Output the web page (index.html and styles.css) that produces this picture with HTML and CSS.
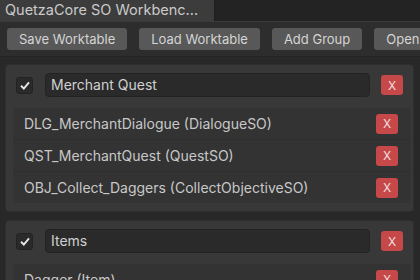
FILE: index.html
```html
<!DOCTYPE html>
<html lang="en">
<head>
    <meta charset="UTF-8">
    <title>QuetzaCore SO Workbench</title>
    <link rel="stylesheet" href="styles.css">
</head>
<body>
    <div class="tabbar">
        <div class="tab">QuetzaCore SO Workbenc...</div>
        <div class="tab-rest"></div>
    </div>
    <div class="toolbar">
        <button class="tool-btn">Save Worktable</button>
        <button class="tool-btn">Load Worktable</button>
        <button class="tool-btn">Add Group</button>
        <button class="tool-btn">Open</button>
    </div>
    <div class="groups">
        <div class="group">
            <div class="group-head">
                <span class="check"><svg width="10" height="9" viewBox="0 0 10 9"><path d="M1 4.8 L3.8 7.5 L9 1.3" fill="none" stroke="#e8e8e8" stroke-width="1.9"/></svg></span>
                <div class="name-field">Merchant Quest</div>
                <button class="del">X</button>
            </div>
            <div class="items">
                <div class="item"><span>DLG_MerchantDialogue (DialogueSO)</span><button class="del">X</button></div>
                <div class="item"><span>QST_MerchantQuest (QuestSO)</span><button class="del">X</button></div>
                <div class="item"><span>OBJ_Collect_Daggers (CollectObjectiveSO)</span><button class="del">X</button></div>
            </div>
        </div>
        <div class="group">
            <div class="group-head">
                <span class="check"><svg width="10" height="9" viewBox="0 0 10 9"><path d="M1 4.8 L3.8 7.5 L9 1.3" fill="none" stroke="#e8e8e8" stroke-width="1.9"/></svg></span>
                <div class="name-field">Items</div>
                <button class="del">X</button>
            </div>
            <div class="items">
                <div class="item"><span>Dagger (Item)</span><button class="del">X</button></div>
            </div>
        </div>
    </div>
</body>
</html>
```

FILE: styles.css
```css
body {
    margin: 0;
    width: 420px;
    height: 280px;
    overflow: hidden;
    background-color: #282828;
    font-family: Inter, "Noto Sans", sans-serif;
    color: #c8c8c8;
}
.tabbar {
    display: flex;
    height: 21px;
    background-color: #232323;
}
.tab {
    width: 209px;
    padding-left: 5px;
    background-color: #3c3c3c;
    font-size: 14.5px;
    line-height: 20px;
    color: #cacaca;
    white-space: nowrap;
}
.tab-rest {
    flex: 1;
    border-left: 1px solid #1e1e1e;
}
.toolbar {
    display: flex;
    gap: 12px;
    padding: 6px 0 6px 7px;
    background-color: #2d2d2d;
    border-top: 1px solid #3a3a3a;
    border-bottom: 1px solid #242424;
    overflow: hidden;
}
.tool-btn {
    flex-shrink: 0;
    height: 22px;
    padding: 0 12px;
    background-color: #585858;
    color: #d4d4d4;
    border: none;
    border-radius: 3px;
    font-family: Inter, "Noto Sans", sans-serif;
    font-size: 13px;
}
.groups {
    padding: 7px 6px 0 5px;
}
.group {
    background-color: #383838;
    border: 1px solid #2e2e2e;
    border-radius: 4px;
    padding: 8px 10px 8px 7px;
    margin-bottom: 8px;
}
.group-head {
    display: flex;
    align-items: center;
    height: 24px;
}
.check {
    display: flex;
    align-items: center;
    justify-content: center;
    width: 17px;
    height: 17px;
    margin-left: 3px;
    border-radius: 3px;
    background-color: #2a2a2a;
    border: 1px solid #232323;
    box-sizing: border-box;
}
.name-field {
    flex: 1;
    margin-left: 12px;
    height: 24px;
    padding-left: 5px;
    background-color: #2a2a2a;
    border: 1px solid #232323;
    border-radius: 4px;
    box-sizing: border-box;
    font-size: 14px;
    line-height: 22px;
    color: #d0d0d0;
}
.del {
    width: 22px;
    height: 20px;
    margin-left: 11px;
    padding: 0;
    background-color: #c64848;
    color: #f0dede;
    border: none;
    border-radius: 3px;
    font-family: Inter, "Noto Sans", sans-serif;
    font-size: 12px;
}
.items {
    margin-top: 11px;
    margin-right: -8px;
    background-color: #333333;
    border-radius: 3px;
}
.item {
    display: flex;
    align-items: center;
    justify-content: space-between;
    height: 31px;
    padding: 0 13px 0 11px;
    border-bottom: 1px solid #2f2f2f;
    font-size: 14px;
    color: #c8c8c8;
}
.item:last-child {
    border-bottom: none;
}
```
